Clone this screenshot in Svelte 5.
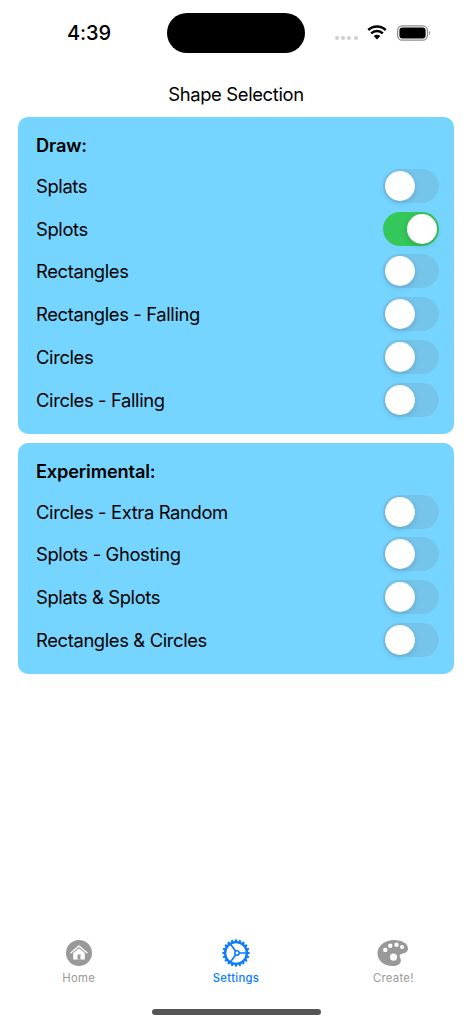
<script>
  const draw = [
    { label: 'Splats', on: false },
    { label: 'Splots', on: true },
    { label: 'Rectangles', on: false },
    { label: 'Rectangles - Falling', on: false },
    { label: 'Circles', on: false },
    { label: 'Circles - Falling', on: false }
  ];
  const experimental = [
    { label: 'Circles - Extra Random', on: false },
    { label: 'Splots - Ghosting', on: false },
    { label: 'Splats & Splots', on: false },
    { label: 'Rectangles & Circles', on: false }
  ];
  const sections = [
    { title: 'Draw:', rows: draw },
    { title: 'Experimental:', rows: experimental }
  ];
  const teeth = Array.from({ length: 20 }, (_, i) => i * 18);
</script>

<div class="screen">
  <header class="status">
    <div class="time">4:39</div>
    <div class="island"></div>
    <div class="indicators">
      <div class="dots"><i></i><i></i><i></i><i></i></div>
      <svg class="wifi" viewBox="0 0 22 16" width="22" height="16">
        <path d="M11 15.500 7.700 12.100a4.700 4.700 0 0 1 6.600 0z" fill="#000" />
        <path d="M5.200 9.300a8.200 8.200 0 0 1 11.600 0" fill="none" stroke="#000" stroke-width="2.500" />
        <path d="M2.300 6a12.400 12.400 0 0 1 17.400 0" fill="none" stroke="#000" stroke-width="2.500" />
      </svg>
      <svg class="battery" viewBox="0 0 34 16" width="34" height="16">
        <rect x="0.600" y="0.800" width="29.800" height="14.400" rx="4.600" fill="none" stroke="#8e8e8e" stroke-width="1.200" />
        <rect x="2.400" y="2.600" width="26.200" height="10.800" rx="3" fill="#000" />
        <path d="M32 6v4a2.200 2.200 0 0 0 1.200-2A2.200 2.200 0 0 0 32 6z" fill="#9a9a9a" />
      </svg>
    </div>
  </header>

  <main class="content">
    <h1>Shape Selection</h1>
    {#each sections as section}
      <section class="card">
        <h2>{section.title}</h2>
        {#each section.rows as row}
          <div class="row">
            <span>{row.label}</span>
            <div class="toggle" class:on={row.on}><div class="knob"></div></div>
          </div>
        {/each}
      </section>
    {/each}
  </main>

  <nav class="tabs">
    <div class="tab">
      <svg viewBox="0 0 28 28" width="28" height="28">
        <circle cx="14" cy="14" r="13" fill="#999" />
        <path d="M6 13.800 14 7l8 6.800" fill="none" stroke="#fff" stroke-width="1.300" stroke-linecap="round" stroke-linejoin="round" />
        <path d="M8.200 14 14 9.200l5.800 4.800V20.500H8.200z" fill="#fff" />
        <rect x="12.500" y="15.500" width="3" height="5" fill="#999" />
      </svg>
      <span>Home</span>
    </div>
    <div class="tab active">
      <svg viewBox="0 0 28 28" width="28" height="28">
        <g fill="#0a7aff">
          {#each teeth as a}
            <rect x="12.900" y="0.400" width="2.200" height="3.400" transform="rotate({a} 14 14)" />
          {/each}
        </g>
        <g fill="none" stroke="#0a7aff">
          <circle cx="14" cy="14" r="10.900" stroke-width="2.300" />
          <circle cx="15" cy="14" r="2.200" stroke-width="1.500" />
          <path d="M17.200 14H24.400M13.700 12.200 8.400 5M13.700 15.800 8.400 23" stroke-width="1.700" />
        </g>
      </svg>
      <span>Settings</span>
    </div>
    <div class="tab">
      <svg viewBox="0 0 32 28" width="32" height="28">
        <path fill="#999" fill-rule="evenodd" d="M17 1C25 1 31 4.500 31 9.500c0 3.500-3.200 4.600-6 5.200-2 .5-2.700 1.400-2.200 3 .5 1.600 1.500 3 .9 5C23 25.800 19.500 27 15.500 27 7 27 .5 21.500.5 14.500.5 6.500 8 1 17 1z
          M8.300 8.700a2.200 2.200 0 1 0 0 4.400 2.200 2.200 0 0 0 0-4.400z
          M13.300 4.500a2.200 2.200 0 1 0 0 4.400 2.200 2.200 0 0 0 0-4.400z
          M19.500 3.500a2.200 2.200 0 1 0 0 4.400 2.200 2.200 0 0 0 0-4.400z
          M25 6a2 2 0 1 0 0 4 2 2 0 0 0 0-4z
          M16.500 14.500a3.600 3.600 0 1 0 0 7.200 3.600 3.600 0 0 0 0-7.200z" />
      </svg>
      <span>Create!</span>
    </div>
  </nav>
  <div class="home-area"><div class="home-bar"></div></div>
</div>

<style>
  :global(body) {
    margin: 0;
    background: #fff;
  }
  .screen {
    width: 472px;
    height: 1024px;
    display: flex;
    flex-direction: column;
    font-family: Inter, "Liberation Sans", sans-serif;
    color: #000;
    overflow: hidden;
  }
  .status {
    height: 66px;
    flex: none;
    display: grid;
    grid-template-columns: 167px 138px 167px;
    box-sizing: border-box;
    padding-top: 13px;
  }
  .time {
    text-align: center;
    font-size: 20px;
    font-weight: 500;
    line-height: 40px;
    padding-left: 11px;
    letter-spacing: -0.1px;
  }
  .island {
    height: 40px;
    border-radius: 20px;
    background: #000;
  }
  .indicators {
    height: 40px;
    display: flex;
    align-items: center;
    padding-left: 30px;
  }
  .dots {
    display: flex;
    gap: 2.200px;
    margin-top: 10px;
    margin-right: 8px;
  }
  .dots i {
    width: 4px;
    height: 4px;
    border-radius: 50%;
    background: #d0d0d0;
  }
  .wifi {
    margin-top: -2px;
    margin-right: 9px;
  }
  .battery {
    margin-top: -1px;
  }
  .content {
    flex: 1;
    display: flex;
    flex-direction: column;
    padding: 0 18px;
    gap: 9px;
  }
  h1 {
    margin: 0 0 -1px;
    height: 43px;
    padding-top: 16px;
    box-sizing: border-box;
    font-size: 18.400px;
    letter-spacing: -0.35px;
    line-height: 25px;
    font-weight: 400;
    text-align: center;
  }
  .card {
    background: #75d5ff;
    border-radius: 10px;
    padding: 16px 15px 17px 18px;
    display: flex;
    flex-direction: column;
    gap: 8.800px;
  }
  h2 {
    margin: 0 0 2px;
    font-size: 18.200px;
    letter-spacing: -0.15px;
    line-height: 25px;
    font-weight: 600;
  }
  .row {
    height: 34px;
    display: flex;
    align-items: center;
    justify-content: space-between;
    font-size: 18.400px;
    letter-spacing: -0.37px;
  }
  .toggle {
    width: 56px;
    height: 34px;
    border-radius: 17px;
    background: rgba(120, 120, 128, 0.16);
    position: relative;
  }
  .toggle.on {
    background: #34c759;
  }
  .knob {
    position: absolute;
    top: 2px;
    left: 2px;
    width: 30px;
    height: 30px;
    border-radius: 50%;
    background: #fff;
    box-shadow: 0 2px 6px rgba(0, 0, 0, 0.14), 0 0 1px rgba(0, 0, 0, 0.1);
  }
  .on .knob {
    left: 24px;
  }
  .tabs {
    flex: none;
    display: grid;
    grid-template-columns: 1fr 1fr 1fr;
    margin-bottom: 1px;
  }
  .tab {
    display: flex;
    flex-direction: column;
    align-items: center;
    gap: 4px;
    color: #999;
    font-size: 11.300px;
    font-weight: 400;
    line-height: 14px;
    letter-spacing: 0.3px;
  }
  .tab.active {
    color: #0a7aff;
    font-weight: 500;
  }
  .home-area {
    flex: none;
    height: 38px;
    display: flex;
    align-items: flex-end;
    justify-content: center;
    padding-bottom: 9px;
    box-sizing: border-box;
  }
  .home-bar {
    width: 169px;
    height: 6px;
    border-radius: 3px;
    background: #555;
  }
</style>
